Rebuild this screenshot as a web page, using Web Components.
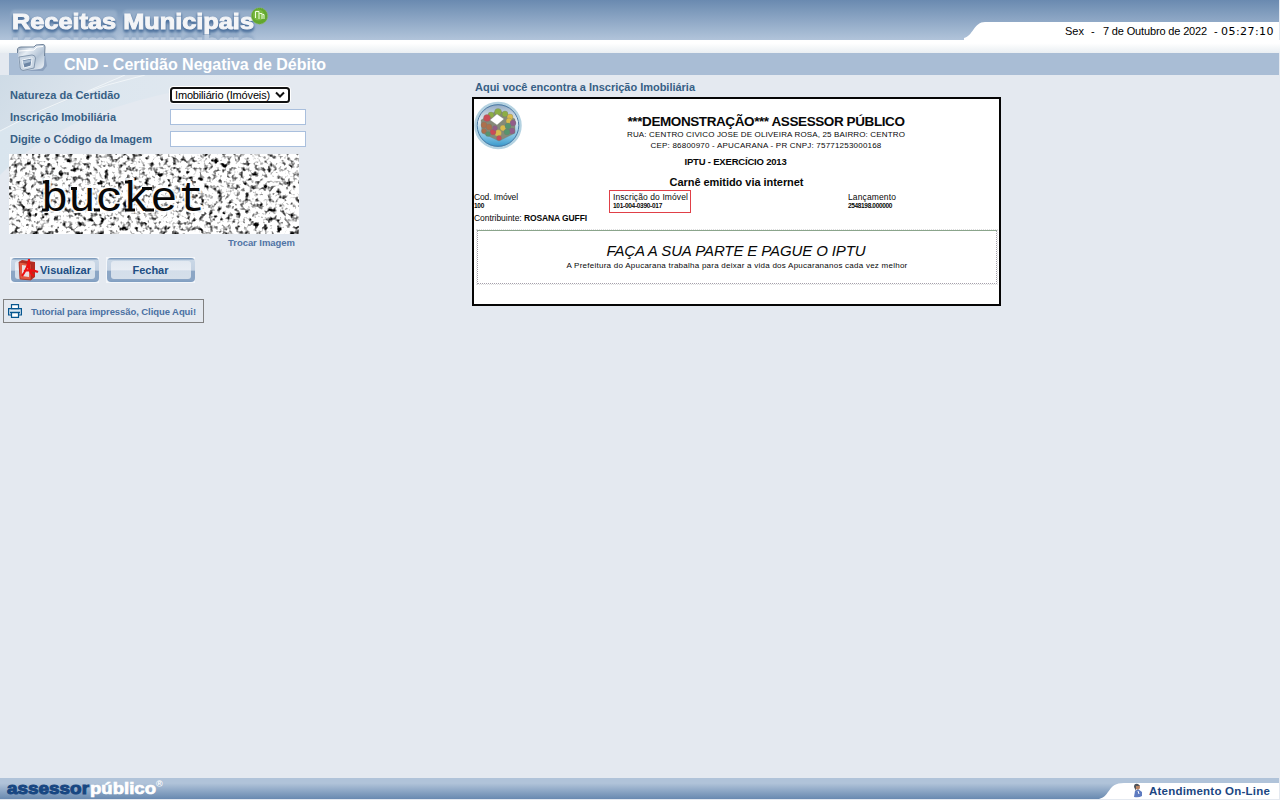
<!DOCTYPE html>
<html lang="pt-BR"><head><meta charset="utf-8"><title>Receitas Municipais</title>
<style>html,body{margin:0;height:100%;background:#e4e9f0;overflow:hidden}body{font:11px "Liberation Sans",Arial,sans-serif}</style></head>
<body><receitas-page></receitas-page>
<script>
const define=(name,html)=>customElements.define(name,class extends HTMLElement{
 constructor(){super();this.attachShadow({mode:'open'}).innerHTML=html;}
});
/* Text run spaced to a given width */
customElements.define('fit-text',class extends HTMLElement{
 connectedCallback(){
  if(this.shadowRoot)return;
  this.attachShadow({mode:'open'}).innerHTML='<style>:host{display:inline-block;white-space:nowrap;flex:none}span{display:inline-block}</style><span><slot></slot></span>';
  const w=+this.getAttribute('w'),s=this.shadowRoot.querySelector('span');
  const n=this.textContent.length,m=s.getBoundingClientRect().width;
  s.style.letterSpacing=((w-m)/n)+'px';this.style.width=w+'px';
 }
});
define('app-header',`<style>
:host{display:block;height:75px}
.top{height:40px;background:linear-gradient(#6a8ab0,#b1c4da);display:flex;justify-content:space-between;position:relative;margin-right:1px}
.logo{width:300px;height:40px;position:relative;overflow:hidden}
.logo svg{display:block}
.word{position:absolute;left:0;top:0;width:260px;height:35px;-webkit-box-reflect:below -3px linear-gradient(transparent 60%,rgba(255,255,255,.35))}
.word text{filter:drop-shadow(0 2px 1px #4f739e) drop-shadow(0 1px 1px #5a7ca6)}
.logo .ball{position:absolute;left:250px;top:6px}
.date{width:315px;height:18px;margin-top:22px;position:relative;display:flex;align-items:center}
.date svg{position:absolute;left:0;top:0}
.date fit-text{position:relative}
.fade{height:13px;background:linear-gradient(#fff 25%,#e9eef2)}
.bar{height:22px;margin:0 1px 0 9px;background:#a9bdd5;position:relative;display:flex;align-items:center;color:#fff;font:bold 16px/22px "Liberation Sans";padding-left:55px;box-sizing:border-box}
.bar fit-text{position:relative;top:1px}
.bar svg{position:absolute;left:6px;top:-11px}
</style>
<div class="top"><div class="logo"><svg width="260" height="40"><defs><filter id="b" x="-5%" y="-30%" width="110%" height="160%"><feGaussianBlur stdDeviation=".8"/></filter></defs><g fill="#a9bdd4" opacity=".5" filter="url(#b)"><rect x="11" y="10" width="106" height="26" rx="4"/><rect x="123" y="10" width="131" height="26" rx="4"/></g></svg>
<div class="word"><svg width="260" height="35"><text x="12" y="29" font-family="Liberation Sans" font-weight="bold" font-size="22.5" textLength="242" lengthAdjust="spacingAndGlyphs" fill="#f4f5f7" stroke="#f4f5f7" stroke-width="1">Receitas Municipais</text></svg></div>
<svg class="ball" width="20" height="20"><circle cx="9.500" cy="10" r="8.200" fill="#62a72e" stroke="#91bd68" stroke-dasharray="1 1"/><circle cx="8.500" cy="9" r="5.500" fill="#86c248" opacity=".7"/><path d="M5.500 12V5.500H9V13M9.500 7.500H12V13M12.500 8.500h1.500V13" stroke="#efffe0" fill="none"/></svg>
</div><div class="date"><svg width="315" height="18"><path d="M0 18V16C9 14 10 0 21 0H315V18Z" fill="#fff"/></svg>
<fit-text w="19" style="margin-left:101px">Sex</fit-text><fit-text w="4" style="margin-left:7px">-</fit-text><fit-text w="104" style="margin-left:8px">7 de Outubro de 2022</fit-text><fit-text w="4" style="margin-left:7px">-</fit-text><fit-text w="53" style="font:11px 'DejaVu Sans';margin-left:3px">05:27:10</fit-text></div></div>
<div class="fade"></div>
<div class="bar"><svg width="34" height="32" viewBox="0 0 34 32"><defs><linearGradient id="g" x1="0" y1="0" x2="1" y2="1"><stop stop-color="#8fa0b5"/><stop offset=".3" stop-color="#e6edf4"/><stop offset=".6" stop-color="#b3c3d5"/><stop offset="1" stop-color="#f6f9fc"/></linearGradient></defs>
<path d="M8 29 28 29 32 24 30 12Z" fill="#61799a" opacity=".4"/><path d="M3 8Q3 5 6 5L19 5 21 3 28 2.500Q30 2.500 30 5L29 23Q28 27 24 27L9 29Q5 28 4 23Z" fill="url(#g)"/><path d="M2.500 11V7Q3 5 6 5L19 5 21 3 28 2.500Q30 2.500 30 5L29.500 14" stroke="#6f8299" fill="none"/><path d="M4 9 19 8 22 5 28 4.500" stroke="#fff" fill="none"/><path d="M4 15 17 13Q20 13 20.500 16L19 26 8 28.500Q5 28 5 25Z" fill="#cbd7e4" stroke="#7288a1" stroke-width=".8"/><path d="M7 18 17 16 16 24 9 26Z" fill="#6d86a5" stroke="#f0f5fa"/><path d="M8 19 16 17.500 15.500 20 8 22Z" fill="#a9bdd3"/></svg>
<fit-text w="262">CND - Certidão Negativa de Débito</fit-text></div>`);
define('field-row',`<style>:host{display:flex;height:22px;align-items:center;color:#376085;font-weight:bold}div{width:160px}::slotted(*){flex:none}</style><div><slot name="label"></slot></div><slot></slot>`);
define('text-box',`<style>:host{display:block;width:136px;height:16px;box-sizing:border-box;border:1px solid #a9bfdd;background:#fff}</style>`);
define('select-box',`<style>:host{display:flex;box-sizing:border-box;width:120px;height:16px;border:2px solid #111;border-radius:3.5px;background:#fff;color:#000;font-weight:normal;font-size:11px;align-items:center;padding-left:3px;box-shadow:0 0 0 1px #fff;line-height:12px}svg{margin-left:5px}</style><fit-text w="95">Imobiliário (Imóveis)</fit-text><svg width="10" height="8"><path d="M1 1.500 5 5.500 9 1.500" stroke="#111" stroke-width="2" fill="none"/></svg>`);
define('captcha-image',`<style>:host{display:block;width:290px;height:80px}svg{display:block}text{paint-order:stroke}</style>
<svg width="290" height="80"><defs><filter id="n" x="0" y="0" width="100%" height="100%" color-interpolation-filters="sRGB"><feTurbulence type="fractalNoise" baseFrequency=".22" numOctaves="2" seed="4"/><feColorMatrix values="2.3 2.3 0 0 -1.34  2.3 2.3 0 0 -1.34  2.3 2.3 0 0 -1.34  0 0 0 0 1"/></filter></defs>
<rect width="290" height="80" filter="url(#n)"/><text x="32" y="57" font-family="Liberation Mono" font-size="43" textLength="164" lengthAdjust="spacingAndGlyphs" fill="#080808" stroke="#fff" stroke-opacity=".85" stroke-width="4">bucket</text><path d="M34 28h6M33 56h6M62 34.500h6M85 56h6M116 28h6M116 56h10M136 56h9M133 34.500h10" stroke="#080808" stroke-width="3"/></svg>`);
define('glass-button',`<style>:host{display:block;width:89px;height:26px;background:#f3f6fa}
.f{box-sizing:border-box;margin:0 .5px;height:24px;padding:3px 4px 3px;border-radius:4px;background:linear-gradient(#7e9cbd 0 1px,#c9d7e6 2px,#c3d1e2 50%,#8ca6c5 56%,#8aa5c5 90%,#7f9dc0);position:relative;top:1px}
.i{height:18px;border-radius:3px;background:linear-gradient(#e2e9f1,#e8edf4 50%,#d3deea 54%,#d5dfea);display:flex;align-items:center;justify-content:center;color:#204e83;font-weight:bold;line-height:18px}</style><div class="f"><div class="i"><slot></slot></div></div>`);
define('pdf-icon',`<style>:host{display:block;width:21px;height:22px;margin-right:1px;position:relative;left:0;top:-1px}</style><svg width="21" height="23"><path d="M1 4 4 2 17 4V19L13 22 2 21Z" fill="#b52c20"/><path d="M1 4 13 6V22L2 21Z" fill="#e4573f" stroke="#a12a20" stroke-width=".7"/><path d="M4 7 11 8V19L4 18Z" fill="#eadfe1"/><path d="M4 18Q10 10 11 1M11 1V10Q13 17 16 18M6 13Q13 11 20 14" fill="none" stroke="#ed1011" stroke-width="2.200"/></svg>`);
define('certidao-form',`<style>
:host{display:block;width:472px;padding-top:9px;box-sizing:border-box}
.rows{padding-left:10px}captcha-image{margin:4px 0 0 9px}
.swap{width:295px;text-align:right;height:18px;line-height:18px;font-weight:bold;font-size:9.500px;color:#5074a5}
.buttons{display:flex;gap:7px;padding:5px 0 0 10px}
.tut{margin:16px 0 0 3px;width:201px;height:24px;box-sizing:border-box;border:1px solid #808080;display:flex;align-items:center;color:#4b71a3;font-weight:bold;font-size:9.500px}
.tut svg{margin:0 9px 0 4px}
</style><div class="rows">
<field-row><fit-text slot="label" w="110">Natureza da Certidão</fit-text><select-box></select-box></field-row>
<field-row><fit-text slot="label" w="106">Inscrição Imobiliária</fit-text><text-box></text-box></field-row>
<field-row><fit-text slot="label" w="142">Digite o Código da Imagem</fit-text><text-box></text-box></field-row></div>
<captcha-image></captcha-image><div class="swap"><fit-text w="67">Trocar Imagem</fit-text></div>
<div class="buttons"><glass-button><pdf-icon></pdf-icon><fit-text w="51">Visualizar</fit-text></glass-button><glass-button><fit-text w="36">Fechar</fit-text></glass-button></div>
<div class="tut"><svg width="14" height="14" fill="#fff" stroke="#06568f" stroke-width="1.200"><path d="M.6 11V4.600h12.800V11Z" fill="#dce7f1"/><path d="M3.500.6h7v4h-7ZM3.500 8.500h7v4.900h-7Z"/><path d="M2 8.500h10" stroke-width="1.500"/></svg><fit-text w="165">Tutorial para impressão, Clique Aqui!</fit-text></div>`);
define('cube-seal',`<style>:host{display:block;width:49px;height:49px}</style><svg width="49" height="49"><defs><linearGradient id="o" x1="0" y1="0" x2="0" y2="1"><stop stop-color="#8ba4bf"/><stop offset=".4" stop-color="#e5edf4"/><stop offset=".75" stop-color="#7cc0e0"/><stop offset="1" stop-color="#2c92c9"/></linearGradient></defs><circle cx="24" cy="24.500" r="22.500" fill="url(#o)" stroke="#b4d2e1" stroke-width="2.500"/><circle cx="24" cy="24.500" r="20.800" fill="none" stroke="#4c7ba5"/>
<g stroke="#6f786f" stroke-width=".3"><path d="m24 9 17 9 0 14-16 8L8 32 7 19Z" fill="#858a78"/><g fill="#8cae45"><circle cx="24" cy="11" r="3.500"/><circle cx="17" cy="14" r="3"/><circle cx="31" cy="13" r="3"/></g><g fill="#d9ba4d"><circle cx="36" cy="16" r="3"/><circle cx="29" cy="27" r="3"/><circle cx="24" cy="32" r="3.500"/><circle cx="35" cy="20" r="3"/></g><g fill="#cb4b56"><circle cx="13" cy="17" r="3.500"/><circle cx="19" cy="31" r="3"/><circle cx="25" cy="37" r="2.500"/></g><g fill="#925c8a"><circle cx="39" cy="22" r="3"/><circle cx="38" cy="30" r="3"/><circle cx="21" cy="27" r="2.500"/></g><g fill="#ad6f4b"><circle cx="10" cy="24" r="3"/><circle cx="15" cy="26" r="3"/><circle cx="10" cy="30" r="2.500"/></g><g fill="#57946d"><circle cx="33" cy="31" r="3"/><circle cx="14" cy="33" r="2.500"/><circle cx="34" cy="25" r="3"/></g><path d="m23 13 7 5-7 6-7-5Z" fill="#fff"/></g></svg>`);
define('sample-bill',`<style>
:host{display:block;width:529px;height:209px;box-sizing:border-box;border:2px solid #050505;background:#fff;color:#080808;font-size:8.500px}
.head{display:flex;height:56px}cube-seal{margin:2px 0 0}.issuer{flex:1;padding:15px 0 0 10px;text-align:center}
.issuer>div{height:11px;line-height:11px}.issuer>.big{height:15px;line-height:16px;font-weight:bold;font-size:13.5px}.issuer .big+div,.issuer .big+div+div{font-size:8px}
.year,.via{text-align:center;font-weight:bold}.year{height:13px;line-height:13px;font-size:9.5px}.via{height:15px;line-height:15px;margin-top:7px;font-size:11px}
.year fit-text{position:relative;left:-1px}
.cols{display:flex;height:23px}.c{height:22px;box-sizing:border-box;line-height:10px;padding-top:2px}.c b{display:block;font-size:6.500px;line-height:8px}.c:first-child{width:135px}.mid{width:82px;border:1px solid #e04048;padding:1px 0 0 3px;margin-right:157px;height:23px}
.who{height:16px;line-height:11px}
.msg{height:54px;margin:1px 2px 0 3px;box-sizing:border-box;border:1px dotted #a5a0ab;border-top:1px solid #8ba58c;outline:1px dotted #dedfdf;text-align:center;padding:11px 0 0 0}.msg div{height:18px;font:italic 15px/17px "Liberation Sans"}.msg div fit-text{position:relative;left:-1px}.msg p{margin:0;line-height:12px;font-size:8px}
</style><div class="head"><cube-seal></cube-seal><div class="issuer"><div class="big"><fit-text w="277">***DEMONSTRAÇÃO*** ASSESSOR PÚBLICO</fit-text></div><div><fit-text w="278">RUA: CENTRO CIVICO JOSE DE OLIVEIRA ROSA, 25 BAIRRO: CENTRO</fit-text></div><div><fit-text w="231">CEP: 86800970 - APUCARANA - PR CNPJ: 75771253000168</fit-text></div></div></div>
<div class="year"><fit-text w="102">IPTU - EXERCÍCIO 2013</fit-text></div><div class="via"><fit-text w="134">Carnê emitido via internet</fit-text></div>
<div class="cols"><div class="c"><fit-text w="44">Cod. Imóvel</fit-text><b><fit-text w="10">100</fit-text></b></div><div class="c mid"><fit-text w="75">Inscrição do Imóvel</fit-text><b><fit-text w="49">101-004-0390-017</fit-text></b></div><div class="c"><fit-text w="48">Lançamento</fit-text><b><fit-text w="44">2548198.000000</fit-text></b></div></div>
<div class="who"><fit-text w="50">Contribuinte:&nbsp;</fit-text><fit-text w="63" style="font-weight:bold">ROSANA GUFFI</fit-text></div>
<div class="msg"><div><fit-text w="259">FAÇA A SUA PARTE E PAGUE O IPTU</fit-text></div><p><fit-text w="341">A Prefeitura do Apucarana trabalha para deixar a vida dos Apucarananos cada vez melhor</fit-text></p></div>`);
define('app-footer',`<style>:host{display:flex;justify-content:space-between;height:21px;margin:0 1px 1px 0;background:linear-gradient(#b0c3d9 25%,#6889b0)}
.chat{width:180px;height:17px;margin-top:4px;position:relative;display:flex;align-items:center;color:#1b4682;font:bold 11.5px "Liberation Sans"}.chat svg,.chat fit-text{position:relative}.chat .bg{position:absolute;left:0;top:0}</style>
<svg width="200" height="21"><g font-family="Liberation Sans" font-weight="bold" font-size="17"><text x="7" y="16" textLength="82" lengthAdjust="spacingAndGlyphs" fill="#174681" stroke="#174681" stroke-width="1">assessor</text><text x="90" y="16" textLength="66" lengthAdjust="spacingAndGlyphs" fill="#fff" stroke="#fff" stroke-width=".7">público</text><text x="156" y="9" font-size="9" fill="#fff">®</text></g></svg>
<div class="chat"><svg class="bg" width="180" height="17"><path d="M0 17C12 14 8 1 25 1H180V17Z" fill="#fff"/></svg><svg width="12" height="15" style="margin-left:33px"><path d="M2 14 3 8 6 6 10 9 10 13Q7 15 2 14Z" fill="#5e7bc0"/><circle cx="5.500" cy="4" r="2.500" fill="#b98361"/><path d="M2 4Q2 0 6 1L8 3 4 3 4 8Z" fill="#50545a"/><path d="M6 8 7 11" stroke="#fff"/></svg><fit-text w="121" style="margin-left:5px">Atendimento On-Line</fit-text></div>`);
define('receitas-page',`<style>:host{display:flex;flex-direction:column;width:1280px;height:800px;background:#e4e9f0}
main{flex:1;display:flex;background:url("data:image/svg+xml,%3Csvg xmlns='http://www.w3.org/2000/svg' width='330' height='110'%3E%3Cdefs%3E%3ClinearGradient id='a' x2='1' y2='.3'%3E%3Cstop stop-color='%23cedbe6'/%3E%3Cstop offset='1' stop-color='%23e2e8ef'/%3E%3C/linearGradient%3E%3ClinearGradient id='c' x2='1'%3E%3Cstop stop-color='%23d9e5ee'/%3E%3Cstop offset='1' stop-color='%23e4e9f0'/%3E%3C/linearGradient%3E%3C/defs%3E%3Cpath d='M0 0H325Q90 8 0 100Z' fill='url(%23c)'/%3E%3Cpath d='M0 0H145Q70 20 0 56Z' fill='url(%23a)'/%3E%3Cpath d='M0 56Q70 17 145 0M88 16 125 0' stroke='%23f0f5f8' fill='none'/%3E%3C/svg%3E") no-repeat}
aside{padding-top:5px}.cap{height:17px;line-height:15px;padding-left:3px;color:#376085;font-weight:bold}
</style><app-header></app-header><main><certidao-form></certidao-form><aside><div class="cap"><fit-text w="220">Aqui você encontra a Inscrição Imobiliária</fit-text></div><sample-bill></sample-bill></aside></main><app-footer></app-footer>`);
</script></body></html>
